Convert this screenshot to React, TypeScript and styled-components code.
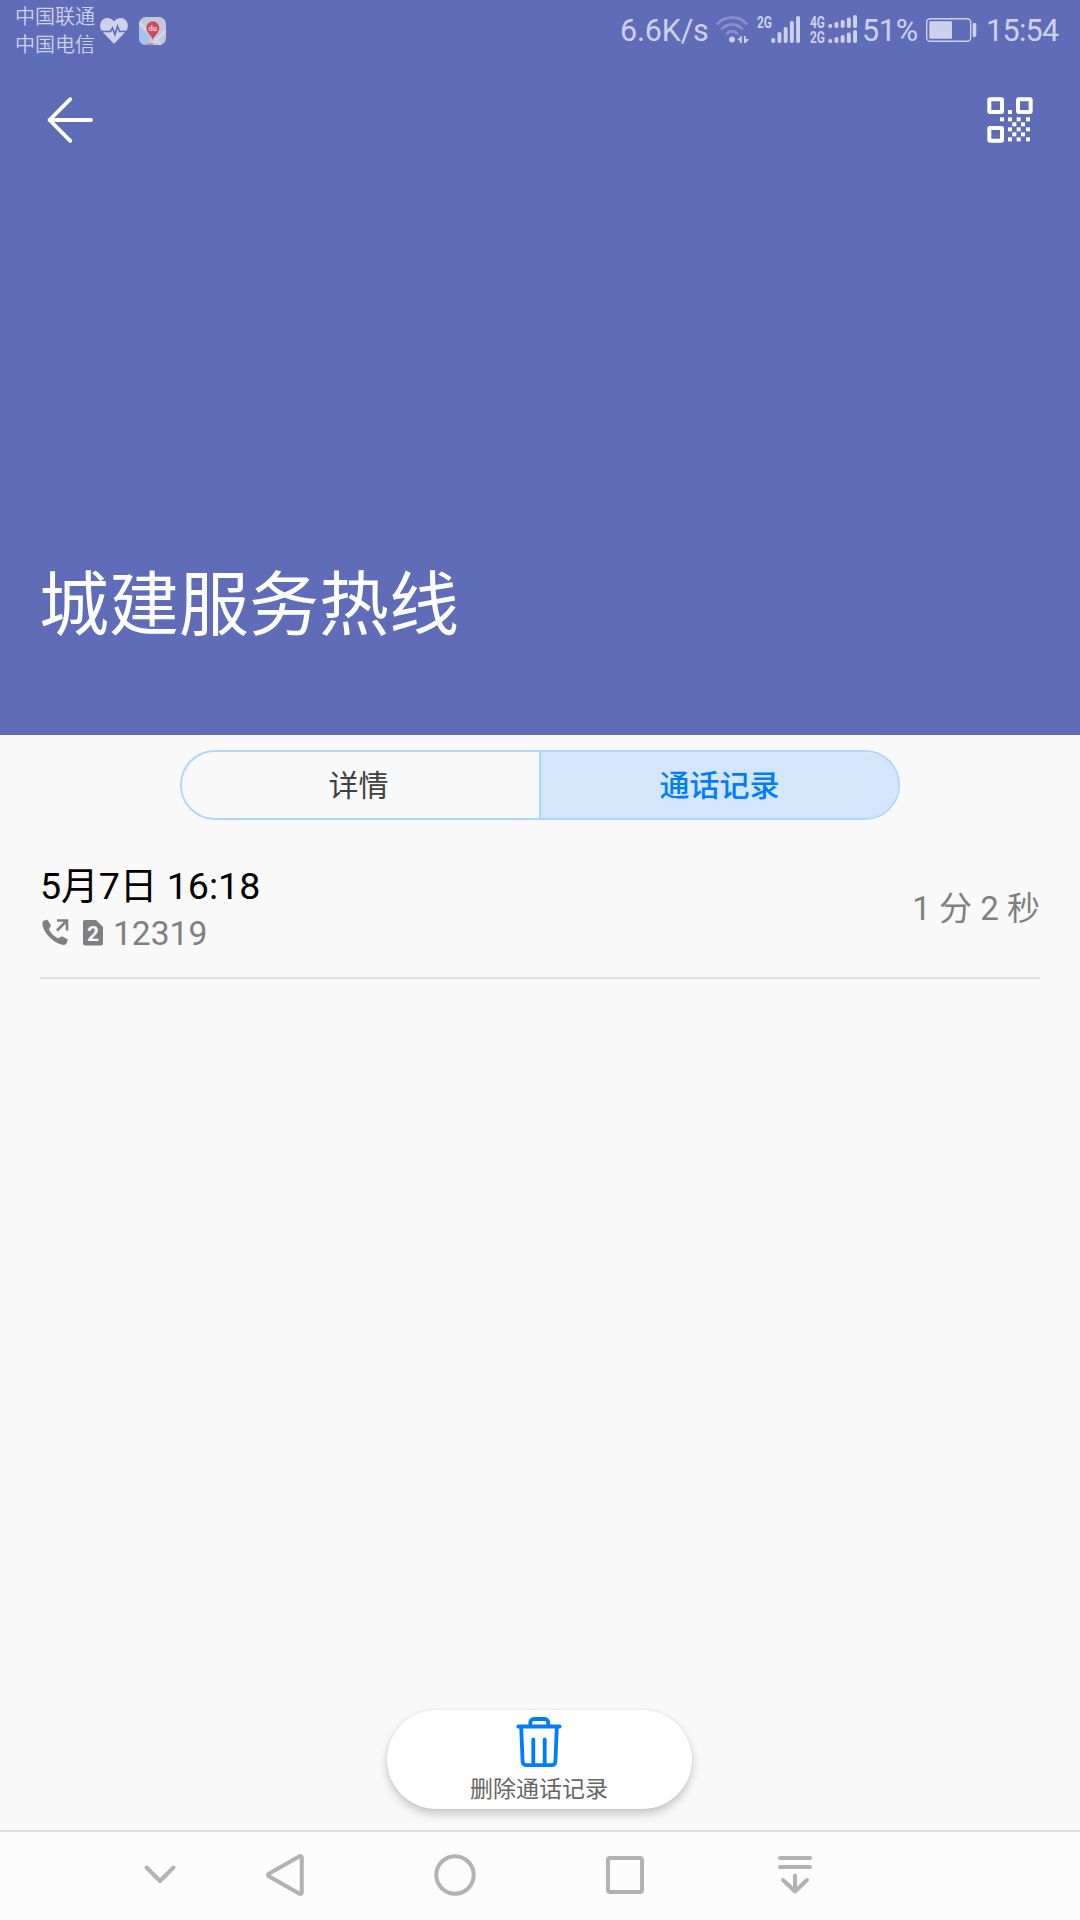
import React from "react";
import styled, { createGlobalStyle } from "styled-components";

const GlobalStyle = createGlobalStyle`
  *, *::before, *::after { box-sizing: border-box; }
  body {
    margin: 0;
    background: #f9f9f9;
    font-family: Roboto, "Noto Sans CJK SC", sans-serif;
  }
  svg { display: block; flex: none; overflow: visible; }
`;

const STATUS = "#cdd1ec";
const ACCENT = "#007dff";

const Screen = styled.div`
  width: 1080px;
  height: 1920px;
  display: flex;
  flex-direction: column;
  background: #f9f9f9;
  overflow: hidden;
`;

const Header = styled.header`
  height: 735px;
  flex: none;
  display: flex;
  flex-direction: column;
  background: #5f6cb8;
  color: #fff;
`;

const StatusBar = styled.div`
  height: 60px;
  flex: none;
  display: flex;
  align-items: center;
  padding: 0 20px 0 15px;
  color: ${STATUS};
`;

const Carriers = styled.div`
  width: 85px;
  height: 60px;
  padding-top: 4px;
  font-size: 20px;
  line-height: 27.5px;
  font-weight: 350;
  white-space: nowrap;
`;

const Notifications = styled.div`
  display: flex;
  gap: 11px;
  margin-top: 2px;
`;

const StatusRight = styled.div`
  margin-left: auto;
  height: 60px;
  display: flex;
  align-items: center;
`;

const StatusText = styled.span<{ $width: number; $spacing?: number }>`
  width: ${(p) => p.$width}px;
  flex: none;
  padding-top: 2px;
  font-size: 30.5px;
  line-height: 36px;
  letter-spacing: ${(p) => p.$spacing ?? 0}px;
  white-space: nowrap;
`;

const Toolbar = styled.div`
  height: 120px;
  flex: none;
  display: flex;
  align-items: center;
  justify-content: space-between;
  padding: 0 46px;
`;

const IconButton = styled.button`
  display: flex;
  padding: 0;
  border: 0;
  background: none;
  color: inherit;
`;

const ContactName = styled.h1`
  margin: auto 0 77px;
  padding-left: 39px;
  font-size: 70px;
  line-height: 104px;
  font-weight: 400;
`;

const Tabs = styled.div`
  width: 720px;
  height: 70px;
  flex: none;
  margin: 15px auto 0;
  display: flex;
  border: 2px solid #afd6fd;
  border-radius: 35px;
  overflow: hidden;
`;

const Tab = styled.button<{ $active?: boolean }>`
  flex: none;
  width: ${(p) => (p.$active ? 359 : 357)}px;
  padding: ${(p) => (p.$active ? "1px 0 0" : "1px 4px 0 0")};
  border: 0;
  border-left: ${(p) => (p.$active ? "2px solid #afd6fd" : "0")};
  background: ${(p) => (p.$active ? "#d4e6fb" : "transparent")};
  color: ${(p) => (p.$active ? ACCENT : "#404040")};
  font: ${(p) => (p.$active ? 500 : 400)} 30px/44px Roboto, "Noto Sans CJK SC", sans-serif;
`;

const CallRow = styled.div`
  height: 159px;
  flex: none;
  margin: 0 40px;
  display: flex;
  justify-content: space-between;
  align-items: center;
  border-bottom: 2px solid #e0e0e0;
`;

const CallInfo = styled.div`
  display: flex;
  flex-direction: column;
  padding-top: 20px;
`;

const CallDate = styled.div`
  font-size: 37.6px;
  line-height: 50px;
  color: #000;
`;

const CallNumber = styled.div`
  display: flex;
  align-items: center;
  height: 46px;
  padding-left: 2px;
  font-size: 33.6px;
  line-height: 46px;
  color: #808080;
  svg { margin-top: -2px; }
  span { margin-left: 10px; }
`;

const Duration = styled.div`
  padding-top: 20px;
  font-size: 33px;
  line-height: 46px;
  color: #808080;
`;

const Content = styled.main`
  flex: 1;
  display: flex;
  flex-direction: column;
  align-items: center;
  justify-content: flex-end;
  padding-bottom: 21px;
`;

const DeleteButton = styled.button`
  width: 305px;
  height: 99px;
  margin-right: 1px;
  padding: 7px 1px 0 0;
  display: flex;
  flex-direction: column;
  align-items: center;
  border: 0;
  border-radius: 50px;
  background: #fff;
  box-shadow: 0 5px 10px rgba(0, 0, 0, 0.2), 0 0 3px rgba(0, 0, 0, 0.08);
  color: #666;
  font: 400 23px/34px Roboto, "Noto Sans CJK SC", sans-serif;
`;

const DeleteLabel = styled.span`
  margin-top: 5px;
`;

const NavBar = styled.nav`
  height: 90px;
  flex: none;
  display: flex;
  padding: 0 0 2px 120px;
  border-top: 2px solid #e0e0e0;
  background: #fcfcfc;
`;

const NavItem = styled.button<{ $width: number }>`
  width: ${(p) => p.$width}px;
  padding: 0;
  border: 0;
  background: none;
  display: flex;
  align-items: center;
  justify-content: center;
`;

const HeartIcon = () => (
  <svg width="28" height="27" viewBox="0 -1 28 27">
    <path d="M14 26 2.2 13.6C-1 9.800-.3 4.200 3.100 1.600 6.600-1 11.500-.1 14 3.600 16.500-.1 21.400-1 24.900 1.600 28.300 4.200 29 9.800 25.800 13.600Z" fill={STATUS} />
    <path d="M0 13.500H10.500L12.500 10 15 16.500 17.500 8.500 19.700 13.500H28" fill="none" stroke="#5f6cb8" strokeWidth="1.700" />
  </svg>
);

const MapIcon = () => (
  <svg width="27" height="28" viewBox="0 0 27 28">
    <defs>
      <clipPath id="map-tile"><rect width="27" height="28" rx="7" /></clipPath>
    </defs>
    <g clipPath="url(#map-tile)">
      <rect width="27" height="28" fill="#c3c8dc" />
      <path d="M0 9 11 20 8 28H0Z" fill="#a3c5ec" />
      <path d="M0 5 22 28M27 14 12 28" stroke="#d3d8ec" strokeWidth="2.400" />
      <path d="M5 28 10 26H15L14 28Z" fill="#d58996" />
    </g>
    <path d="M14 23C12.500 18 7.300 16.500 7.300 10.800a6.500 6.500 0 0 1 13 0C20.300 16.500 15.500 18 14 23Z" fill="#cc4c5c" />
    <text x="13.800" y="13.500" fontSize="7.500" fontWeight="700" textAnchor="middle" fill="#eed5e0">du</text>
  </svg>
);

const WifiIcon = () => (
  <svg width="41" height="28" viewBox="0 0 41 28">
    <g fill="none" strokeWidth="3" strokeLinecap="round" stroke="#858fc9">
      <path d="M1.700 7.500C9.500-.4 22.500-.4 30.300 7.500" />
      <path d="M6.200 12.500C11.500 7.200 20.500 7.200 25.800 12.500" />
      <path d="M11 17.300C13.800 14.700 18.200 14.700 21 17.300" />
    </g>
    <circle cx="16" cy="23.500" r="2.900" fill={STATUS} />
    <path d="M21.500 23.500 25.800 19.500V27H24V25ZM28 20V27H29.500L33 23.500 29.500 22.500V20Z" fill={STATUS} />
  </svg>
);

const Bars = ({ x, base, heights }: { x: number; base: number; heights: number[] }) => (
  <>
    {heights.map((h, i) => (
      <rect key={i} x={x + i * 6.200} y={base - h} width="3.900" height={h} rx="1.700" fill={STATUS} />
    ))}
  </>
);

const NetLabel = ({ y, children }: { y: number; children: string }) => (
  <text x="0" y={y} fontSize="16.500" fontWeight="700" textLength="15" lengthAdjust="spacingAndGlyphs" fill={STATUS}>
    {children}
  </text>
);

const SingleSignal = () => (
  <svg width="53" height="28" viewBox="0 0 53 28">
    <NetLabel y={12}>2G</NetLabel>
    <Bars x={14.300} base={27} heights={[5, 11, 16, 22, 27]} />
  </svg>
);

const DualSignal = () => (
  <svg width="52" height="28" viewBox="0 0 52 28">
    <NetLabel y={12}>4G</NetLabel>
    <NetLabel y={27}>2G</NetLabel>
    <Bars x={18.300} base={12} heights={[4, 6, 8, 10.500, 13]} />
    <Bars x={18.300} base={27} heights={[4, 6, 8, 10.500, 13]} />
  </svg>
);

const BatteryIcon = () => (
  <svg width="60" height="24" viewBox="0 0 60 24">
    <rect x=".7" y=".7" width="44" height="22.600" rx="3.500" fill="none" stroke={STATUS} strokeWidth="1.400" />
    <rect x="3.300" y="3.300" width="22.700" height="17.400" rx="1" fill={STATUS} />
    <rect x="46.700" y="5" width="3.600" height="14" rx="1.400" fill={STATUS} />
  </svg>
);

const BackIcon = () => (
  <svg width="48" height="48" viewBox="0 0 48 48" fill="none" stroke="#fff" strokeWidth="3.800" strokeLinecap="round" strokeLinejoin="round">
    <path d="M24.300 3.200 3.500 24 24.300 44.800M3.500 24H45" />
  </svg>
);

const QR_DOTS = [
  [114, 90], [90, 112], [114, 112], [140, 112], [168, 112], [127, 127], [153, 127],
  [114, 142], [140, 142], [168, 142], [127, 157], [153, 157], [114, 172], [140, 172], [168, 172],
];

const QrIcon = () => (
  <svg width="48" height="48" viewBox="48 48 144 144">
    <g fill="none" stroke="#fff" strokeWidth="12">
      <rect x="58" y="58" width="38" height="38" rx="2" />
      <rect x="144" y="58" width="38" height="38" rx="2" />
      <rect x="58" y="144" width="38" height="38" rx="2" />
    </g>
    {QR_DOTS.map(([x, y]) => (
      <rect key={`${x}-${y}`} x={x} y={y} width="12" height="12" fill="#fff" />
    ))}
  </svg>
);

const OutgoingIcon = () => (
  <svg width="27" height="27" viewBox="0 0 27 27">
    <path d="M1.500 1.800 5.500.7 9 6.500 7 10.200C8.500 14 12.500 17.800 16.500 19.300L20 17.300 25.800 20.500 24.500 24.500C23.500 26.500 20 26.200 16.500 24.500 9.500 21.400 3 14.500.8 7.500.2 5 .2 3 1.500 1.800Z" fill="#808080" />
    <path d="M15 11.500 24.500 2M15 1.500H25V11.500" fill="none" stroke="#808080" strokeWidth="2.600" />
  </svg>
);

const Sim2 = styled.svg`
  margin-left: 14px;
`;

const Sim2Icon = () => (
  <Sim2 width="20" height="27" viewBox="0 0 20 27">
    <path d="M2 1H13L20 8V24.500a2 2 0 0 1-2 2H2a2 2 0 0 1-2-2V3a2 2 0 0 1 2-2Z" fill="#808080" />
    <text x="10" y="21.500" fontSize="21" fontWeight="700" textAnchor="middle" fill="#f9f9f9">2</text>
  </Sim2>
);

const TrashIcon = () => (
  <svg width="46" height="51" viewBox="0 0 46 51" fill="none" stroke={ACCENT} strokeWidth="3.800" strokeLinecap="round" strokeLinejoin="round">
    <path d="M2.300 9.500H43.700M14.300 9V5.500a3.500 3.500 0 0 1 3.500-3.500H28.700a3.500 3.500 0 0 1 3.500 3.500V9" />
    <path d="M5.200 10 6.600 44.500a3.600 3.600 0 0 0 3.600 3.600H35.800a3.600 3.600 0 0 0 3.600-3.600L40.800 10" />
    <path d="M17.300 22.300V47M28.700 22.300V47" />
  </svg>
);

const NavIcon = ({ children }: { children: React.ReactNode }) => (
  <svg width="46" height="46" viewBox="0 0 46 46" fill="none" stroke="#b2b2b2" strokeWidth="4" strokeLinecap="round" strokeLinejoin="round">
    {children}
  </svg>
);

export default function App() {
  return (
    <Screen>
      <GlobalStyle />
      <Header>
        <StatusBar>
          <Carriers>
            <div>中国联通</div>
            <div>中国电信</div>
          </Carriers>
          <Notifications>
            <HeartIcon />
            <MapIcon />
          </Notifications>
          <StatusRight>
            <StatusText $width={96} $spacing={-0.2}>6.6K/s</StatusText>
            <WifiIcon />
            <SingleSignal />
            <DualSignal />
            <StatusText $width={64} $spacing={-0.3}>51%</StatusText>
            <BatteryIcon />
            <StatusText $width={74} $spacing={-0.7}>15:54</StatusText>
          </StatusRight>
        </StatusBar>
        <Toolbar>
          <IconButton aria-label="返回"><BackIcon /></IconButton>
          <IconButton aria-label="二维码"><QrIcon /></IconButton>
        </Toolbar>
        <ContactName>城建服务热线</ContactName>
      </Header>

      <Tabs>
        <Tab>详情</Tab>
        <Tab $active>通话记录</Tab>
      </Tabs>

      <CallRow>
        <CallInfo>
          <CallDate>5月7日 16:18</CallDate>
          <CallNumber>
            <OutgoingIcon />
            <Sim2Icon />
            <span>12319</span>
          </CallNumber>
        </CallInfo>
        <Duration>1 分 2 秒</Duration>
      </CallRow>

      <Content>
        <DeleteButton>
          <TrashIcon />
          <DeleteLabel>删除通话记录</DeleteLabel>
        </DeleteButton>
      </Content>

      <NavBar>
        <NavItem $width={80} aria-label="收起">
          <NavIcon><path d="M9.500 15.500 23 29 36.500 15.500" /></NavIcon>
        </NavItem>
        <NavItem $width={170} aria-label="后退">
          <NavIcon><path d="M37.600 4.300 6.800 21.700a1.500 1.500 0 0 0 0 2.600L37.600 41.700a1.500 1.500 0 0 0 2.200-1.300V5.600A1.500 1.500 0 0 0 37.600 4.300Z" /></NavIcon>
        </NavItem>
        <NavItem $width={170} aria-label="主页">
          <NavIcon><circle cx="23" cy="23" r="18.700" /></NavIcon>
        </NavItem>
        <NavItem $width={170} aria-label="最近">
          <NavIcon><rect x="6" y="6" width="34" height="34" rx="2" /></NavIcon>
        </NavItem>
        <NavItem $width={170} aria-label="通知">
          <NavIcon><path d="M8 6H38M8 15H38M23 23.500V39M11 28 23 39.500 35 28" /></NavIcon>
        </NavItem>
      </NavBar>
    </Screen>
  );
}
